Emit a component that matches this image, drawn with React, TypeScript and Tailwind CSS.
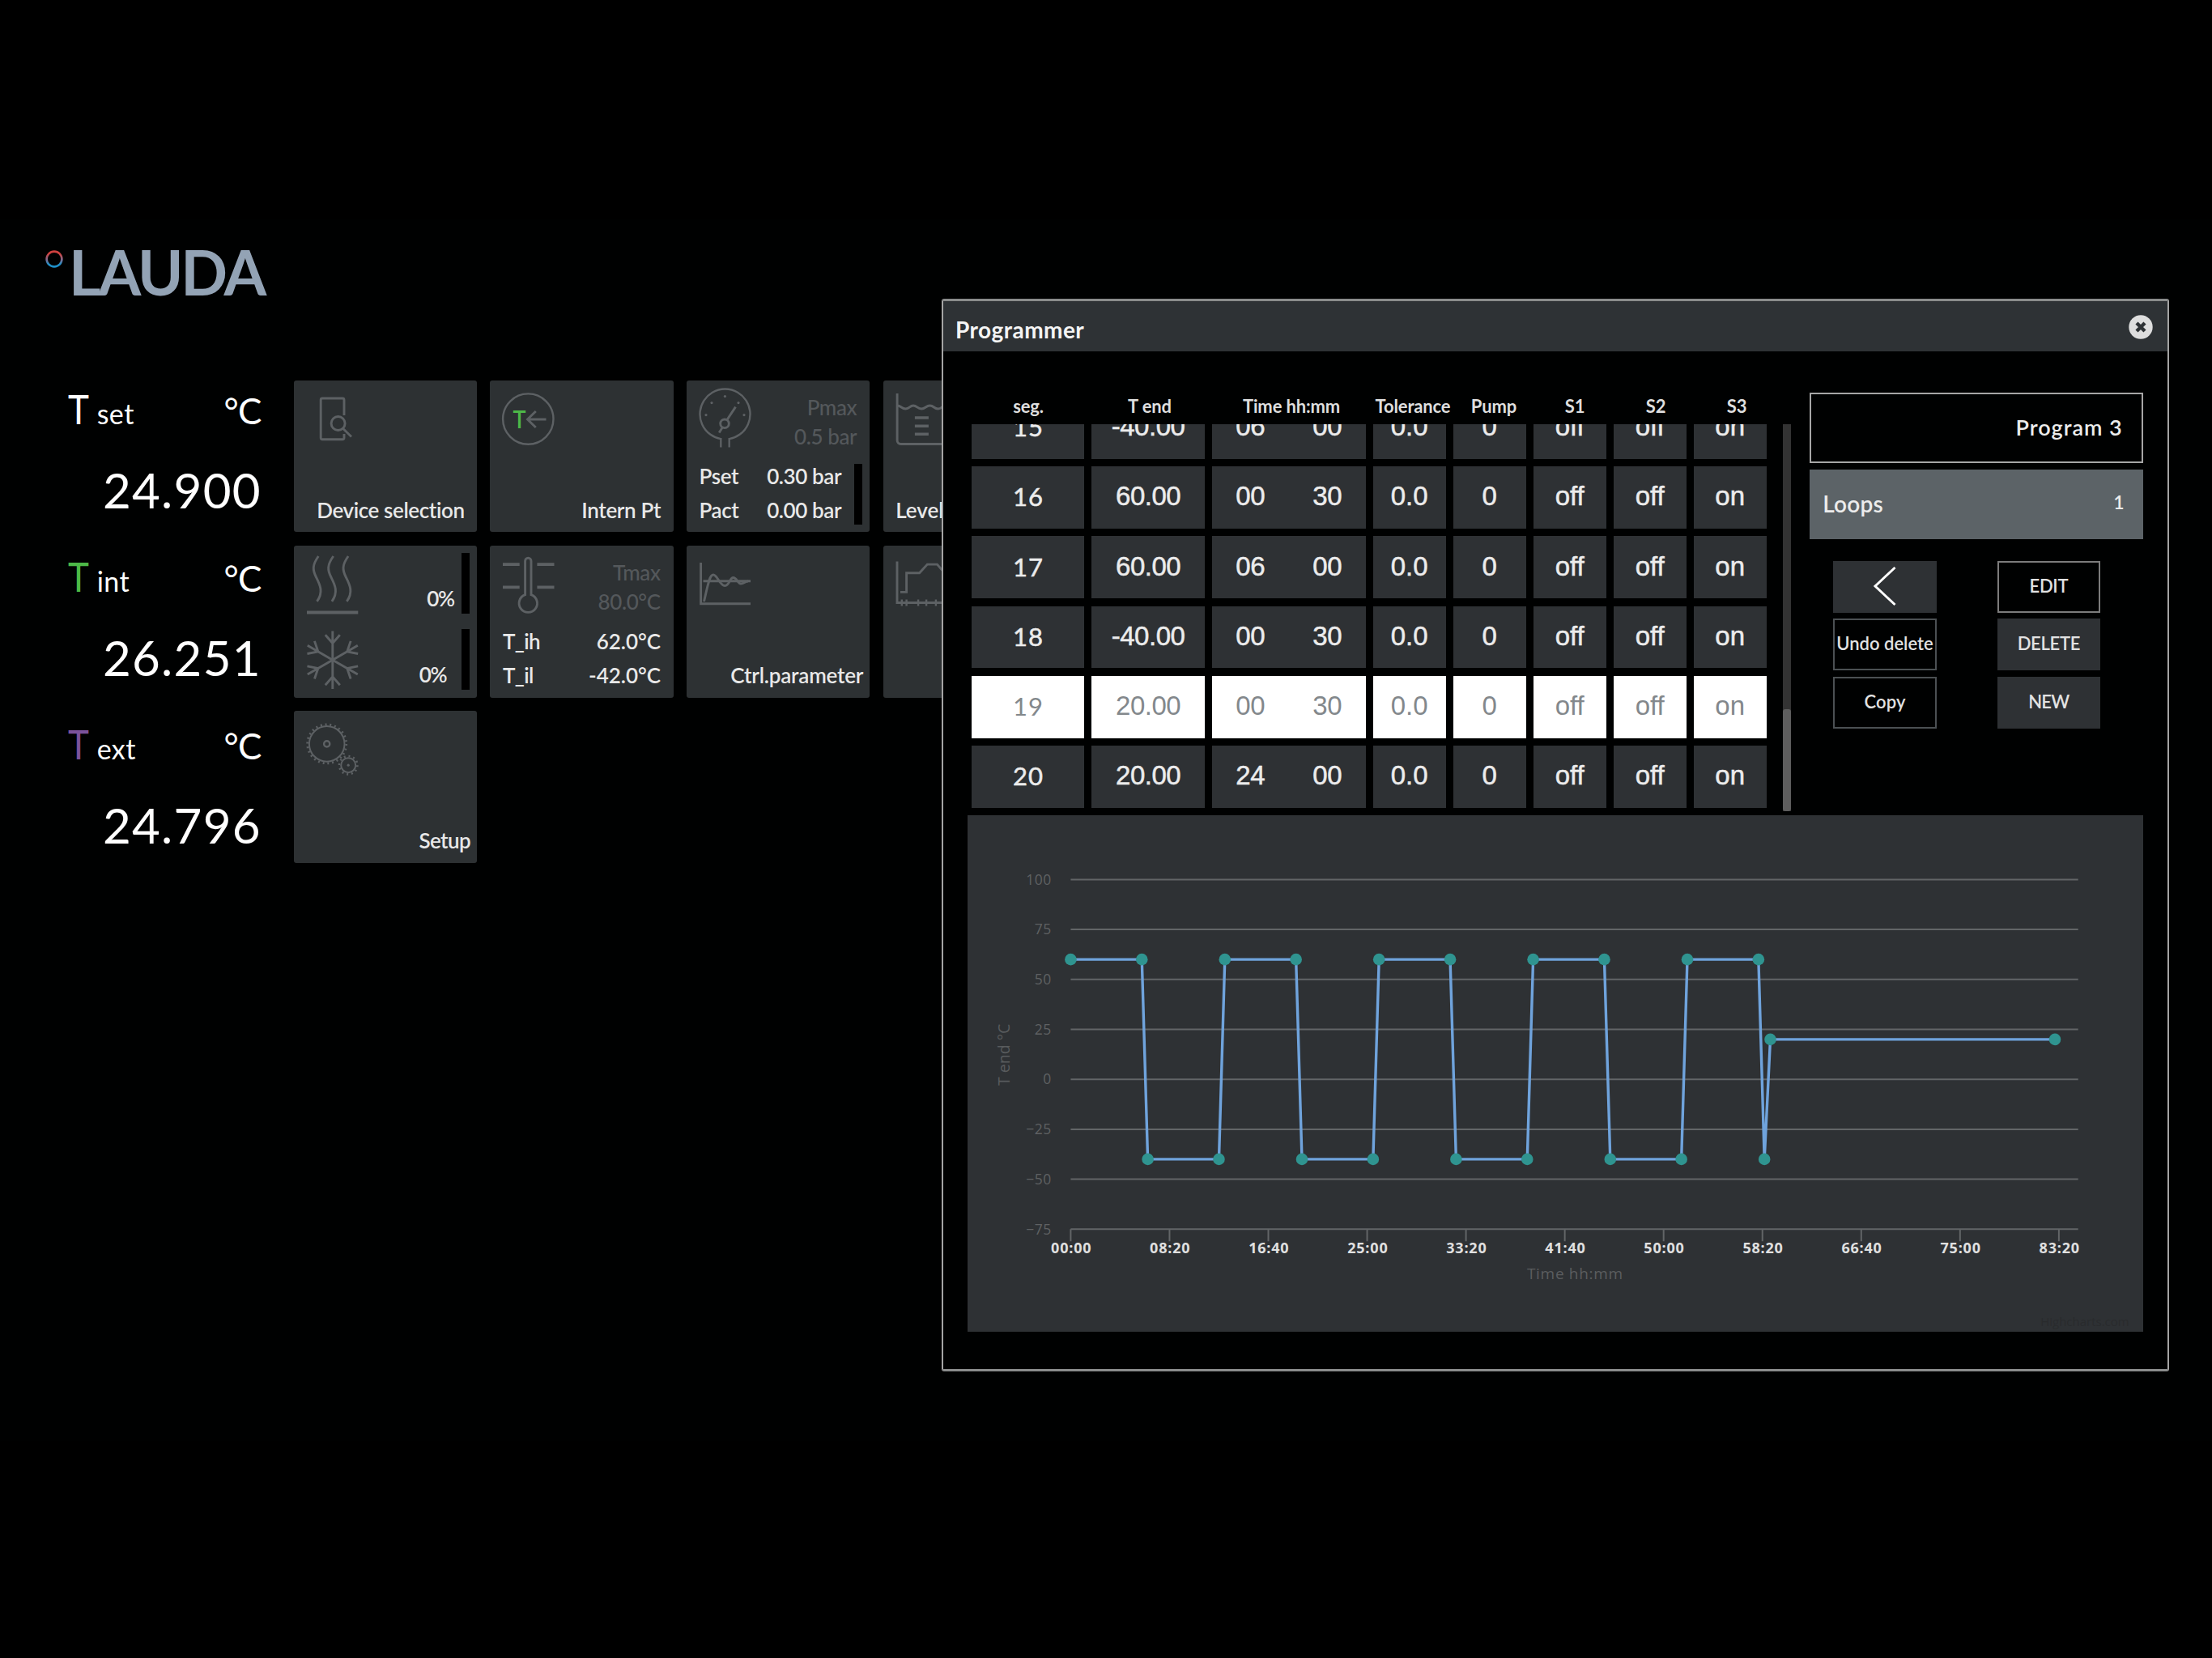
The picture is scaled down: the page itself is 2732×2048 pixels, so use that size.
import * as React from "react";

const readings = [
  { name: "set", value: "24.900", color: "text-white" },
  { name: "int", value: "26.251", color: "text-[#4db848]" },
  { name: "ext", value: "24.796", color: "text-[#7b529b]" },
];

const segments = [
  { seg: "15", tEnd: "-40.00", hh: "06", mm: "00" },
  { seg: "16", tEnd: "60.00", hh: "00", mm: "30" },
  { seg: "17", tEnd: "60.00", hh: "06", mm: "00" },
  { seg: "18", tEnd: "-40.00", hh: "00", mm: "30" },
  { seg: "19", tEnd: "20.00", hh: "00", mm: "30", selected: true },
  { seg: "20", tEnd: "20.00", hh: "24", mm: "00" },
];

const headings = ["seg.", "T end", "Time hh:mm", "Tolerance", "Pump", "S1", "S2", "S3"];

// [minutes, temperature]
const points: [number, number][] = [];
for (let i = 0; i < 5; i++) {
  const t = i * 780;
  points.push([t, 60], [t + 360, 60], [t + 390, -40]);
  if (i < 4) points.push([t + 750, -40]);
}
points.push([3540, 20], [4980, 20]);

const yTicks = [100, 75, 50, 25, 0, -25, -50, -75];
const xTicks = ["00:00", "08:20", "16:40", "25:00", "33:20", "41:40", "50:00", "58:20", "66:40", "75:00", "83:20"];

const Icon = ({ children }: { children: React.ReactNode }) => (
  <svg
    width="90"
    height="94"
    viewBox="0 0 90 94"
    className="shrink-0"
    fill="none"
    stroke="#5d6164"
    strokeWidth={2.9}
  >
    {children}
  </svg>
);

const Tile = ({ children }: { children: React.ReactNode }) => (
  <div className="flex flex-col justify-between overflow-hidden rounded-[3px] bg-[#2d3133] text-[26px] font-semibold text-[#e8e8e8]">
    {children}
  </div>
);

const Label = ({ children, className }: { children: React.ReactNode; className: string }) => (
  <div className={`mb-[6.2px] whitespace-nowrap leading-[41.7px] ${className}`}>{children}</div>
);

const Max = ({ name, value }: { name: string; value: string }) => (
  <div className="pt-[16.4px] pr-[16px] text-right font-medium leading-[35.7px] tracking-[-0.4px] text-[#54585b]">
    <div>{name}</div>
    <div>{value}</div>
  </div>
);

const Bar = () => <div className="mr-[9.5px] h-[75px] w-[9.6px] shrink-0 bg-black" />;

const Tiles = () => (
  <div className="grid auto-rows-[187.8px] grid-cols-[repeat(4,226.2px)] gap-[16.4px]">
    <Tile>
      <Icon>
        <path d="M62 43V24a2 2 0 0 0-2-2H35.2a2 2 0 0 0-2 2v46.8a2 2 0 0 0 2 2H60a2 2 0 0 0 2-2V66" />
        <circle cx="54.6" cy="53" r="8.5" />
        <path d="M60.8 59.5L71 69.5" />
      </Icon>
      <Label className="pr-[15.5px] text-right tracking-[-0.4px]">Device selection</Label>
    </Tile>

    <Tile>
      <Icon>
        <circle cx="47.3" cy="47.6" r="31.2" strokeWidth="2.4" />
        <path d="M69.5 48H46.5M56.8 38L46.5 48l10.3 10" />
        <text x="28.6" y="59" fontSize="30.5" textLength="16" lengthAdjust="spacingAndGlyphs" fill="#4db848" stroke="none">
          T
        </text>
      </Icon>
      <Label className="pr-[15.5px] text-right tracking-[-0.35px]">Intern Pt</Label>
    </Tile>

    <Tile>
      <div className="flex justify-between">
        <Icon>
          <path d="M42.3 82.6V72.1A31 31 0 1 1 52.7 72.1V82.6" strokeWidth="2.4" />
          <circle cx="47" cy="53.3" r="5.3" />
          <path d="M50 48.5L60.5 32.6M44.2 58L40.2 64.4" />
          <g fill="#5d6164" stroke="none">
            <circle cx="47.4" cy="19.6" r="1.6" />
            <circle cx="31" cy="27.6" r="1.6" />
            <circle cx="64" cy="27.6" r="1.6" />
            <circle cx="24" cy="42.6" r="1.6" />
            <circle cx="71" cy="42.6" r="1.6" />
          </g>
        </Icon>
        <Max name="Pmax" value="0.5 bar" />
      </div>
      <div className="flex leading-[41.7px] tracking-[-0.4px]">
        <div className="mb-[6.2px] flex-1 pl-[15.5px]">
          <div>Pset</div>
          <div>Pact</div>
        </div>
        <div className="pr-[16px] text-right">
          <div>0.30 bar</div>
          <div>0.00 bar</div>
        </div>
        <div className="pt-[5.4px]">
          <Bar />
        </div>
      </div>
    </Tile>

    <Tile>
      <Icon>
        <path d="M17.1 16V74a4.5 4.5 0 0 0 4.5 4.5H90" />
        <path d="M17 31C22 31 22.5 35 27.5 35S32.5 31 37 31 42 35 47 35 52.5 31 57.5 31 62.5 35 67.5 35 72 31 77 31" />
        <path d="M38.9 46h17M38.9 56.3h17M38.9 66.3h17" strokeWidth="3.6" />
      </Icon>
      <Label className="pl-[15.5px]">Level</Label>
    </Tile>

    <Tile>
      <div className="flex h-[93.9px]">
        <Icon>
          <path d="M30.3 13C22.5 24 23 30 27.5 39S37 57 28.5 68.8" />
          <path d="M48.7 13C40.9 24 41.4 30 45.9 39S55.4 57 46.9 68.8" />
          <path d="M67.1 13C59.3 24 59.8 30 64.3 39S73.8 57 65.3 68.8" />
          <path d="M16 82.4H79.3" strokeWidth="4" />
        </Icon>
        <div className="flex-1 pt-[51.8px] pr-[9.5px] text-right leading-[26px] tracking-[-1.5px]">0%</div>
        <div className="pt-[9.4px]">
          <Bar />
        </div>
      </div>
      <div className="flex h-[93.9px]">
        <Icon>
          {[0, 60, 120, 180, 240, 300].map((deg) => (
            <path key={deg} d="M47.8 47.2V11.4M38.8 16.2l9 10.3 9-10.3" transform={`rotate(${deg} 47.8 47.2)`} />
          ))}
        </Icon>
        <div className="flex-1 pt-[51.8px] pr-[19px] text-right leading-[26px] tracking-[-1.5px]">0%</div>
        <div className="pt-[9.4px]">
          <Bar />
        </div>
      </div>
    </Tile>

    <Tile>
      <div className="flex justify-between">
        <Icon>
          <path d="M43.6 60.6V19a3.7 3.7 0 0 1 7.4 0V60.6A11.2 11.2 0 1 1 43.6 60.6z" />
          <path d="M16 23.1H36.7M58.4 23.1H79.5M16 51.4H36.7M58.4 51.4H79.5" strokeWidth="3.8" />
        </Icon>
        <Max name="Tmax" value="80.0°C" />
      </div>
      <div className="mb-[6.2px] flex justify-between px-[15.5px] leading-[41.7px]">
        <div className="tracking-[-0.6px]">
          <div>T_ih</div>
          <div>T_il</div>
        </div>
        <div className="text-right">
          <div>62.0°C</div>
          <div>-42.0°C</div>
        </div>
      </div>
    </Tile>

    <Tile>
      <Icon>
        <path d="M17.6 21V71.8H79M20.5 43.8H79" />
        <path d="M21.5 69C26 50 28 36 33 36S41 49.5 47.2 49.5 53 39.5 57.6 39.5 63 47 67 47 72 44 76 44" />
      </Icon>
      <Label className="pr-[8px] text-right tracking-[-0.2px]">Ctrl.parameter</Label>
    </Tile>

    <Tile>
      <Icon>
        <path d="M17 19.5V70.5H90M21 57.4H28.6V33.8H44.6L54.3 23.1H66.5L75 33" />
        <path d="M22.8 66.5v8M28.6 66.5v8M43.1 66.5v8M53.1 66.5v8M64.9 66.5v8" strokeWidth="2.4" />
      </Icon>
    </Tile>

    <Tile>
      <Icon>
        <circle cx="40.7" cy="40.9" r="21.8" strokeWidth="2" />
        <circle cx="40.7" cy="40.9" r="24" strokeWidth="2.8" strokeDasharray="2 3.8" />
        <circle cx="40.7" cy="40.9" r="3.6" strokeWidth="2.4" />
        <circle cx="67.2" cy="67.2" r="9" strokeWidth="2" />
        <circle cx="67.2" cy="67.2" r="11.2" strokeWidth="2.6" strokeDasharray="2 3.86" />
        <circle cx="67.2" cy="67.2" r="1.6" fill="#5d6164" stroke="none" />
      </Icon>
      <Label className="pr-[8px] text-right tracking-[-0.6px]">Setup</Label>
    </Tile>
  </div>
);

const Cell = ({ children, selected }: { children: React.ReactNode; selected?: boolean }) => (
  <div
    className={`flex items-center pb-[3px] font-[Liberation_Sans,sans-serif] text-[33px] ${
      selected ? "bg-white text-[#83888c]" : "bg-[#2e3134] text-[#ececec] [-webkit-text-stroke:0.5px]"
    }`}
  >
    {children}
  </div>
);

const SegmentTable = () => (
  <div className="w-[1016.8px] pt-[55.2px]">
    <div className="grid w-[1000px] grid-cols-[150px_150px_200px_repeat(5,100px)] text-center text-[22px] font-bold leading-[26px] tracking-[-0.15px] text-[#dedede]">
      {headings.map((h) => (
        <div key={h}>{h}</div>
      ))}
    </div>
    <div className="mt-[8.5px] flex h-[478.6px] justify-between overflow-hidden pl-[5.3px]">
      <div className="-mt-[33.5px] flex flex-col gap-[9.4px]">
        {segments.map(({ seg, tEnd, hh, mm, selected }) => (
          <div
            key={seg}
            className="grid h-[76.75px] shrink-0 grid-cols-[139.2px_139.2px_190px_repeat(5,90px)] gap-[9px] text-center"
          >
            <Cell selected={selected}>
              <div className="w-full pt-px font-[Lato,sans-serif] text-[31px] tracking-[0.8px]">{seg}</div>
            </Cell>
            <Cell selected={selected}>
              <div className="w-full tracking-[-0.5px]">{tEnd}</div>
            </Cell>
            <Cell selected={selected}>
              <div className="w-1/2 tracking-[-0.5px]">{hh}</div>
              <div className="w-1/2 tracking-[-0.5px]">{mm}</div>
            </Cell>
            {["0.0", "0", "off", "off", "on"].map((v, i) => (
              <Cell key={i} selected={selected}>
                <div className="w-full">{v}</div>
              </Cell>
            ))}
          </div>
        ))}
      </div>
      <div className="flex w-[9.8px] flex-col justify-end bg-[#333]">
        <div className="h-[125.8px] rounded-[3px] bg-[#5e5e5e]" />
      </div>
    </div>
  </div>
);

const Button = ({ children, className }: { children: React.ReactNode; className: string }) => (
  <button
    className={`flex items-center justify-center whitespace-nowrap pb-[3px] text-[22px] font-semibold text-[#e2e2e2] ${className}`}
  >
    {children}
  </button>
);

const ProgramPanel = () => (
  <div className="ml-[23.5px] w-[412px] pt-[51px]">
    <div className="h-[86.8px] border-2 border-[#a6a6a6] pr-[23.5px] text-right text-[27px] font-semibold leading-[81px] tracking-[1px] text-[#ececec]">
      Program 3
    </div>
    <div className="mt-[7.8px] flex h-[86.4px] items-center justify-between bg-[#5c6367] pr-[23.5px] pb-[2px] pl-[16px] text-[28px] font-semibold tracking-[0.2px] text-[#ececec]">
      <span>Loops</span>
      <span className="pb-[3px] text-[23px]">1</span>
    </div>
    <div className="mt-[26.9px] ml-[29px] grid auto-rows-[63.9px] grid-cols-[127.4px_127.4px] gap-x-[75px] gap-y-[7.7px]">
      <Button className="bg-[#2e3134]">
        <svg width="30" height="52" viewBox="0 0 30 52" className="mt-[2px]" fill="none" stroke="#fff" strokeWidth="3">
          <path d="M27.5 3L3 26l24.500 23" />
        </svg>
      </Button>
      <Button className="border-2 border-[#7c7c7c] tracking-[-0.3px]">EDIT</Button>
      <Button className="border-2 border-[#4b5053]">Undo delete</Button>
      <Button className="bg-[#2e3134] tracking-[-0.3px]">DELETE</Button>
      <Button className="border-2 border-[#4b5053] tracking-[0.1px]">Copy</Button>
      <Button className="bg-[#2e3134] tracking-[-0.7px]">NEW</Button>
    </div>
  </div>
);

const px = (minutes: number) => 127.4 + minutes * 0.2441;
const py = (temp: number) => 326.2 - temp * 2.4677;

const Chart = () => (
  <svg
    width="1451.7"
    height="637.9"
    viewBox="0 0 1451.7 637.9"
    className="ml-[30.3px] block bg-[#2e3134] font-[Open_Sans,sans-serif]"
  >
    {yTicks.map((t) => (
      <g key={t}>
        <path d={`M${px(0)} ${py(t)}H1371.700`} stroke="#626567" strokeWidth="2" />
        <text x="103.8" y={py(t) + 6.3} textAnchor="end" fontSize="17.5" letterSpacing="0.5" fill="#5f6163">
          {t < 0 ? `−${-t}` : t}
        </text>
      </g>
    ))}
    {xTicks.map((t, i) => (
      <g key={t}>
        <path d={`M${px(i * 500)} ${py(-75)}v15`} stroke="#626567" strokeWidth="2" />
        <text x={px(i * 500) + 0.8} y="541.5" textAnchor="middle" fontSize="18" fontWeight="700" letterSpacing="0.8" fill="#e0e0e0">
          {t}
        </text>
      </g>
    ))}
    <polyline
      points={points.map(([m, t]) => `${px(m)},${py(t)}`).join(" ")}
      fill="none"
      stroke="#6fa3dc"
      strokeWidth="3.4"
      strokeLinejoin="round"
    />
    {points.map(([m, t]) => (
      <circle key={m} cx={px(m)} cy={py(t)} r="7.3" fill="#2f9490" />
    ))}
    <text x="750.4" y="573.3" textAnchor="middle" fontSize="19" letterSpacing="0.7" fill="#5b5d5f">
      Time hh:mm
    </text>
    <text transform="translate(51.5 295.8) rotate(-90)" textAnchor="middle" fontSize="19.5" fill="#585b5d">
      T end °C
    </text>
    <text x="1434.7" y="631" textAnchor="end" fontSize="15" fill="#292b2d">
      Highcharts.com
    </text>
  </svg>
);

const Programmer = () => (
  <div className="absolute top-[99px] left-[1163px] h-[1325px] w-[1516px] rounded-[3px] border-x-2 border-y-[3px] border-x-[#a4a4a4] border-y-[#8a8c8c] bg-[#000101]">
    <div className="flex h-[62px] items-center justify-between bg-[#2e3235] pr-[18.5px] pl-[15px]">
      <h2 className="pt-[7px] text-[28px] font-bold tracking-[0.46px] text-[#f4f4f4]">Programmer</h2>
      <svg width="30" height="30" viewBox="0 0 30 30" className="mt-[2px]">
        <circle cx="15" cy="15" r="14.7" fill="#dedede" />
        <path d="M10 10l10 10m0-10l-10 10" stroke="#2e3235" strokeWidth="4.4" />
      </svg>
    </div>
    <div className="flex h-[572.7px] pl-[30px]">
      <SegmentTable />
      <ProgramPanel />
    </div>
    <Chart />
  </div>
);

const App = () => {
  return (
    <main className="h-[2048px] w-[2732px] overflow-hidden bg-black pt-[270px] font-[Lato,sans-serif] text-white">
      <div className="relative h-[1510px] bg-[#000101]">
        <header className="flex h-[199.7px] items-start pt-[27.6px] pl-[56px]">
          <svg width="22" height="22" viewBox="0 0 22 22" className="mt-[11.4px]">
            <defs>
              <linearGradient id="ring" x1="0" y1="0" x2="0" y2="1">
                <stop offset="0.15" stopColor="#d0413f" />
                <stop offset="0.55" stopColor="#7d6d93" />
                <stop offset="0.85" stopColor="#1f8fc8" />
              </linearGradient>
            </defs>
            <circle cx="11" cy="11" r="9.4" fill="none" stroke="url(#ring)" strokeWidth="2.6" />
          </svg>
          <div className="ml-[7px] text-[76px] font-bold leading-[76px] tracking-[-3px] text-[#93a3b5]">LAUDA</div>
        </header>

        <div className="flex">
          <div className="w-[362.9px] shrink-0 pr-[40px] pl-[83.5px]">
            {readings.map(({ name, value, color }) => (
              <div key={name} className="h-[207.2px] pt-[5px]">
                <div className="flex items-baseline leading-[60px]">
                  <span className={`origin-left scale-x-[0.86] text-[51px] ${color}`}>T</span>
                  <span className="ml-[6px] text-[34px] tracking-[0.5px]">{name}</span>
                  <span className="ml-auto text-[44px] tracking-[-0.6px]">°C</span>
                </div>
                <div className="mt-[28px] text-right text-[60px] leading-[72px] tracking-[1.3px]">{value}</div>
              </div>
            ))}
          </div>
          <Tiles />
        </div>

        <Programmer />
      </div>
    </main>
  );
};

export default App;
